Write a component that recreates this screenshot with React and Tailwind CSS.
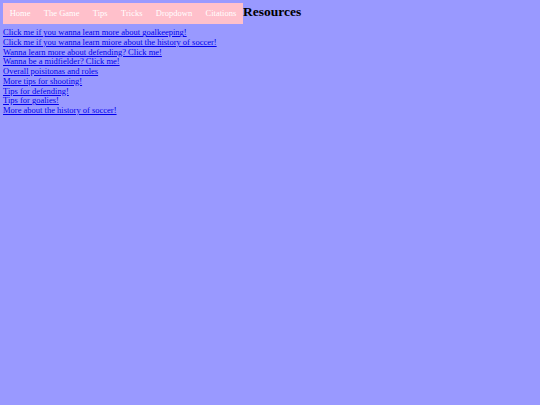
import React from 'react';

const navItems = ['Home', 'The Game', 'Tips', 'Tricks', 'Dropdown', 'Citations'];

const links = [
  'Click me if you wanna learn more about goalkeeping!',
  'Click me if you wanna learn miore about the history of soccer!',
  'Wanna learn more about defending? Click me!',
  'Wanna be a midfielder? Click me!',
  'Overall poisitonas and roles',
  'More tips for shooting!',
  'Tips for defending!',
  'Tips for goalies!',
  'More about the history of soccer!',
];

export default function App() {
  return (
    <div className="min-h-[405px] w-full bg-[#9999ff] p-[3px] font-['Liberation_Serif',serif] text-[8.5px] leading-[9.7px]">
      <div className="flex items-start">
        <ul className="flex bg-[#ffc0cb] py-[5.8px]">
          {navItems.map((item) => (
            <li key={item} className="px-[6.7px] text-white">
              {item}
            </li>
          ))}
        </ul>
        <h2 className="pt-[1px] text-[13.5px] font-bold leading-[16px] text-black">Resources</h2>
      </div>
      <div className="mt-[4px] flex flex-col items-start">
        {links.map((link) => (
          <a key={link} href="#" className="text-[#0000ee] underline">
            {link}
          </a>
        ))}
      </div>
    </div>
  );
}
